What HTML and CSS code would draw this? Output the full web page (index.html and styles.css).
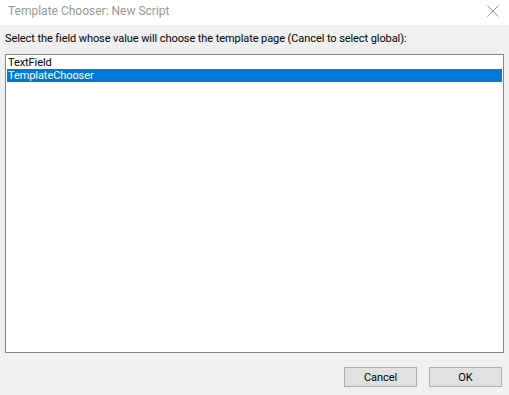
FILE: index.html
```html
<!DOCTYPE html>
<html>
<head>
<meta charset="utf-8">
<link rel="stylesheet" href="styles.css">
</head>
<body>
<div class="window">
  <div class="titlebar">
    <span class="title">Template Chooser: New Script</span>
    <svg class="close" width="12" height="12" viewBox="0 0 12 12"><path d="M0.5 0.5 L11.5 11.5 M11.5 0.5 L0.5 11.5" stroke="#8a8a8a" stroke-width="1" fill="none"/></svg>
  </div>
  <div class="body">
    <div class="label">Select the field whose value will choose the template page (Cancel to select global):</div>
    <div class="listbox">
      <div class="item">TextField</div>
      <div class="item selected">TemplateChooser</div>
    </div>
    <div class="buttons">
      <div class="btn">Cancel</div>
      <div class="btn">OK</div>
    </div>
  </div>
</div>
</body>
</html>
```
FILE: styles.css
```css
html, body {
  margin: 0;
  padding: 0;
}
body {
  width: 509px;
  height: 395px;
  background: #f0f0f0;
  font-family: Roboto, "Liberation Sans", sans-serif;
  font-size: 11px;
  letter-spacing: -0.08px;
  color: #000;
  overflow: hidden;
}
.window {
  display: flex;
  flex-direction: column;
  height: 395px;
}
.titlebar {
  height: 25px;
  background: #fff;
  display: flex;
  align-items: center;
  justify-content: space-between;
  padding: 0 10px 0 8px;
  box-sizing: border-box;
}
.title {
  color: #999;
  font-size: 12px;
  letter-spacing: 0;
  margin-top: -3px;
}
.close {
  margin-top: -4px;
}
.body {
  padding: 0 5px 0 5px;
  display: flex;
  flex-direction: column;
}
.label {
  margin-top: 6px;
  height: 23px;
  line-height: 15px;
}
.listbox {
  height: 299px;
  box-sizing: border-box;
  border: 1px solid #828790;
  background: #fff;
  padding: 1px;
}
.item {
  height: 13px;
  line-height: 13px;
  padding-left: 1px;
  white-space: nowrap;
}
.selected {
  background: #0078d7;
  color: #fff;
}
.buttons {
  display: flex;
  justify-content: flex-end;
  gap: 12px;
  margin-top: 14px;
  padding-right: 2px;
}
.btn {
  width: 73px;
  height: 20px;
  box-sizing: border-box;
  border: 1px solid #adadad;
  background: #e1e1e1;
  display: flex;
  align-items: center;
  justify-content: center;
  line-height: 1;
}
```
